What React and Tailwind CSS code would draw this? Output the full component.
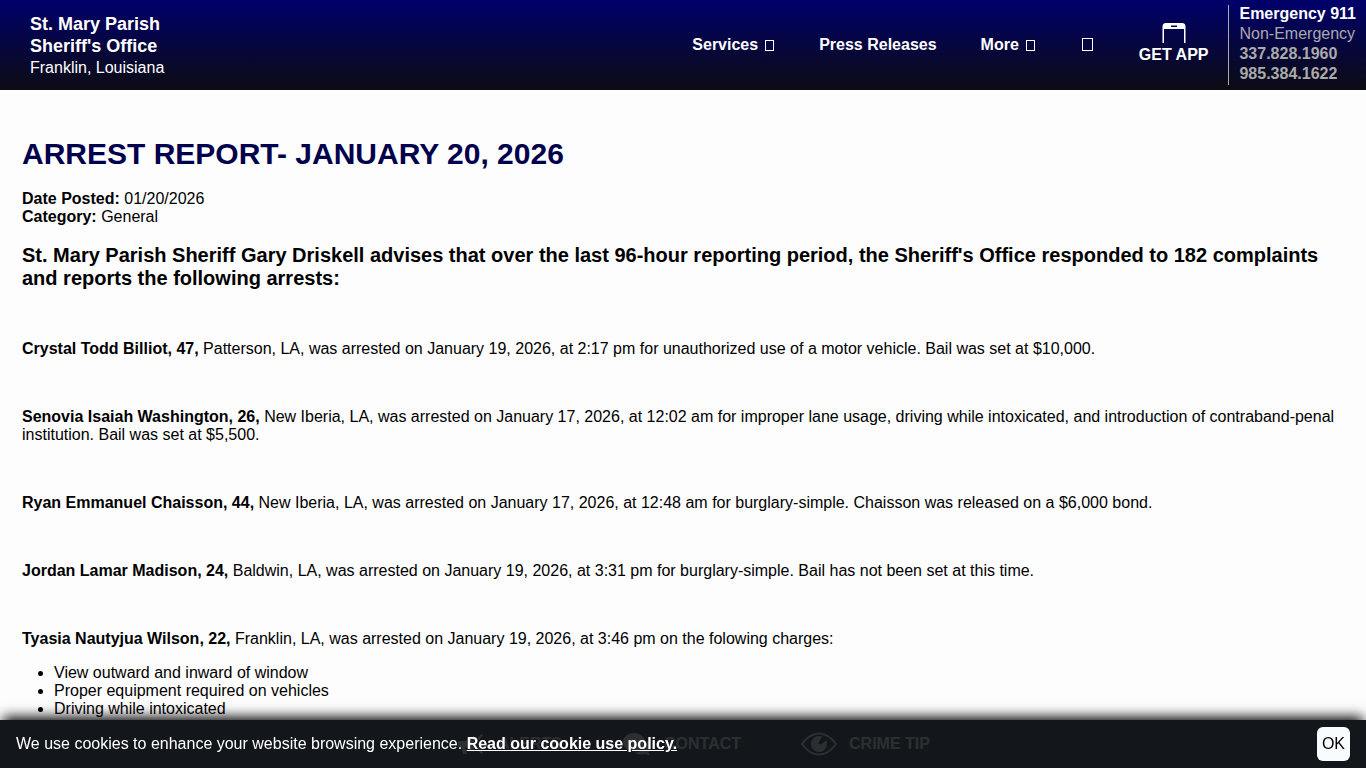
import React from "react";

const arrests = [
  {
    name: "Crystal Todd Billiot, 47,",
    text: "Patterson, LA, was arrested on January 19, 2026, at 2:17 pm for unauthorized use of a motor vehicle. Bail was set at $10,000.",
  },
  {
    name: "Senovia Isaiah Washington, 26,",
    text: "New Iberia, LA, was arrested on January 17, 2026, at 12:02 am for improper lane usage, driving while intoxicated, and introduction of contraband-penal institution. Bail was set at $5,500.",
  },
  {
    name: "Ryan Emmanuel Chaisson, 44,",
    text: "New Iberia, LA, was arrested on January 17, 2026, at 12:48 am for burglary-simple. Chaisson was released on a $6,000 bond.",
  },
  {
    name: "Jordan Lamar Madison, 24,",
    text: "Baldwin, LA, was arrested on January 19, 2026, at 3:31 pm for burglary-simple. Bail has not been set at this time.",
  },
  {
    name: "Tyasia Nautyjua Wilson, 22,",
    text: "Franklin, LA, was arrested on January 19, 2026, at 3:46 pm on the folowing charges:",
    charges: [
      "View outward and inward of window",
      "Proper equipment required on vehicles",
      "Driving while intoxicated",
    ],
  },
];

function BoxGlyph() {
  return (
    <svg viewBox="0 0 11 13" className="h-[13px] w-[11px]" fill="none" stroke="currentColor" aria-hidden="true">
      <rect x="1.5" y="1.5" width="8" height="10" />
    </svg>
  );
}

function LargeBoxGlyph() {
  return (
    <svg viewBox="0 0 12 14" className="h-[14px] w-3" fill="none" stroke="currentColor" aria-hidden="true">
      <rect x="0.5" y="0.5" width="10" height="12" />
    </svg>
  );
}

function PhoneIcon() {
  return (
    <svg viewBox="0 0 24 20" className="h-5 w-6" aria-hidden="true">
      <path
        fill="#fff"
        fillRule="evenodd"
        d="M0.500 20V3.500Q0.500 0 4 0H20Q23.500 0 23.500 3.500V20H22V6H2V20ZM9 2.500V4H15V2.500Z"
      />
    </svg>
  );
}

function EyeIcon() {
  return (
    <svg viewBox="0 0 36 24" className="h-6 w-9" fill="none" stroke="currentColor" strokeWidth="2" aria-hidden="true">
      <path d="M1 12C6 5 12 1.500 18 1.500S30 5 35 12C30 19 24 22.500 18 22.500S6 19 1 12Z" />
      <path
        fill="currentColor"
        stroke="none"
        d="M18 4a8 8 0 1 0 8 8 8 8 0 0 0-.8-3.500L20 12.500l-3-1 4-6.900A8 8 0 0 0 18 4Z"
      />
    </svg>
  );
}

function ChatIcon() {
  return (
    <svg viewBox="0 0 30 24" className="h-6 w-[30px]" fill="currentColor" aria-hidden="true">
      <path d="M12 1C5.900 1 1 5 1 10s4.900 9 11 9 11-4 11-9S18.100 1 12 1Z" />
      <path d="M25 9c2.500 1.500 4 3.500 4 6 0 2-1 3.800-2.600 5.200L28 23.500l-5-1.600c-1.200.4-2.600.6-4 .6-2.500 0-4.700-.7-6.500-1.800C19 20.500 25 16 25 9Z" />
    </svg>
  );
}

function MegaphoneIcon() {
  return (
    <svg viewBox="0 0 30 24" className="h-6 w-[30px]" fill="currentColor" aria-hidden="true">
      <path d="M2 9v6h3l2 7h4l-2-7 9 5V4L9 9H2ZM21 7l4-5 2 1-4 5ZM22 11h6v2h-6ZM21 17l2-1 4 5-2 1Z" />
    </svg>
  );
}

function Header() {
  return (
    <header className="flex h-[90px] items-center justify-between bg-linear-to-b/srgb from-[#00006b] to-[#0c0c14] pr-[10px] pl-[30px] text-white">
      <a href="#home" className="pt-[2px] text-lg leading-[22px] font-bold">
        <span className="block">St. Mary Parish</span>
        <span className="block">Sheriff's Office</span>
        <span className="block text-base leading-[22px] font-normal">Franklin, Louisiana</span>
      </a>

      <div className="flex items-center">
        <nav className="mr-[43px] flex items-center gap-11 font-bold">
          <button type="button" className="flex items-center gap-[6px]">
            Services
            <BoxGlyph />
          </button>
          <a href="#press">Press Releases</a>
          <button type="button" className="flex items-center gap-[6px]">
            More
            <BoxGlyph />
          </button>
          <button type="button" aria-label="Search" className="px-[2px]">
            <LargeBoxGlyph />
          </button>
        </nav>
        <a href="#app" className="mr-5 flex flex-col items-center font-bold">
          <PhoneIcon />
          <span className="leading-6">GET APP</span>
        </a>
        <div className="flex h-20 flex-col border-l border-[#aaaaaa] pl-[10px] leading-5 text-[#aaaaaa]">
          <div className="-mt-px flex flex-col">
            <strong className="text-white">Emergency 911</strong>
            <span>Non-Emergency</span>
            <a href="tel:3378281960" className="font-bold">337.828.1960</a>
            <a href="tel:9853841622" className="font-bold">985.384.1622</a>
          </div>
        </div>
      </div>
    </header>
  );
}

function QuickLinks() {
  return (
    <div className="fixed inset-x-0 bottom-0 flex h-12 items-center justify-center gap-15 bg-[#0c0c14] pl-5 font-bold text-white">
      <a href="#alerts" className="flex items-center gap-3">
        <MegaphoneIcon />
        ALERTS
      </a>
      <a href="#contact" className="flex items-center gap-3">
        <ChatIcon />
        CONTACT
      </a>
      <a href="#tip" className="flex items-center gap-3">
        <EyeIcon />
        CRIME TIP
      </a>
    </div>
  );
}

function CookieBar() {
  return (
    <div className="fixed inset-x-0 bottom-0 flex h-12 items-center justify-between bg-[#14181c]/90 px-4 text-white shadow-[0_-6px_12px_-3px_#000]">
      <p>
        We use cookies to enhance your website browsing experience.{" "}
        <a href="#cookies" className="font-bold underline">Read our cookie use policy.</a>
      </p>
      <button type="button" className="rounded-md bg-[#f8fcfc] px-[5px] py-[5px] text-black">OK</button>
    </div>
  );
}

export default function App() {
  return (
    <div className="bg-[#fdfdfd] font-['Liberation_Sans',Arial,sans-serif] text-base text-black">
      <Header />
      <main className="px-[22px] pt-[46px] pb-12 leading-[18px]">
        <h1 className="text-3xl leading-9 font-bold text-[#00004d]">ARREST REPORT- JANUARY 20, 2026</h1>
        <p className="mt-[18px]">
          <strong>Date Posted:</strong> 01/20/2026
          <br />
          <strong>Category:</strong> General
        </p>
        <h2 className="mt-[18px] text-xl leading-[23px] font-bold">
          St. Mary Parish Sheriff Gary Driskell advises that over the last 96-hour reporting period, the Sheriff's
          Office responded to 182 complaints and reports the following arrests:
        </h2>
        {arrests.map((arrest) => (
          <section key={arrest.name} className="mt-[50px]">
            <p>
              <strong>{arrest.name}</strong> {arrest.text}
            </p>
            {arrest.charges && (
              <ul className="mt-4 list-disc pl-8">
                {arrest.charges.map((charge) => (
                  <li key={charge}>{charge}</li>
                ))}
              </ul>
            )}
          </section>
        ))}
      </main>
      <QuickLinks />
      <CookieBar />
    </div>
  );
}
